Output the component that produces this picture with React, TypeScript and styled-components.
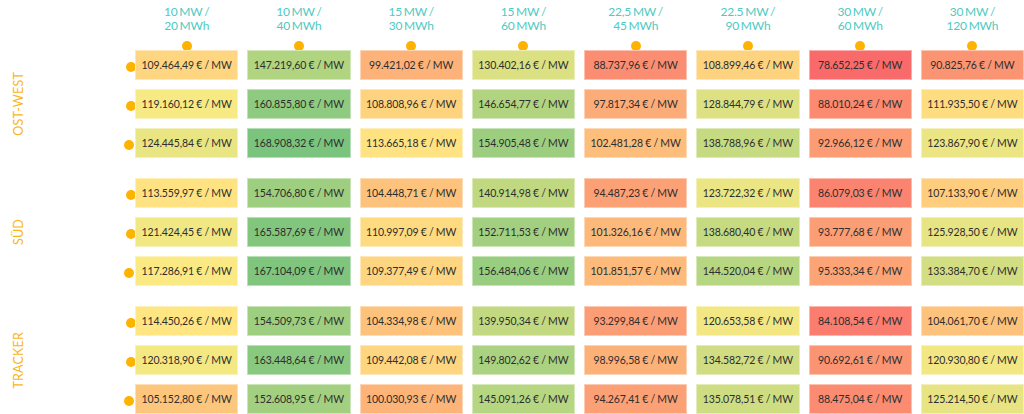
import React from "react";
import styled, { createGlobalStyle } from "styled-components";

const GlobalStyle = createGlobalStyle`
  html, body {
    margin: 0;
    padding: 0;
    background: #ffffff;
  }
  body {
    font-family: Lato, "Liberation Sans", sans-serif;
  }
`;

const columns = [
  ["10 MW /", "20 MWh"],
  ["10 MW /", "40 MWh"],
  ["15 MW /", "30 MWh"],
  ["15 MW /", "60 MWh"],
  ["22,5 MW /", "45 MWh"],
  ["22.5 MW /", "90 MWh"],
  ["30 MW /", "60 MWh"],
  ["30 MW /", "120 MWh"],
];

const groups: { label: string; rows: number[][] }[] = [
  {
    label: "OST-WEST",
    rows: [
      [109464.49, 147219.6, 99421.02, 130402.16, 88737.96, 108899.46, 78652.25, 90825.76],
      [119160.12, 160855.8, 108808.96, 146654.77, 97817.34, 128844.79, 88010.24, 111935.5],
      [124445.84, 168908.32, 113665.18, 154905.48, 102481.28, 138788.96, 92966.12, 123867.9],
    ],
  },
  {
    label: "SÜD",
    rows: [
      [113559.97, 154706.8, 104448.71, 140914.98, 94487.23, 123722.32, 86079.03, 107133.9],
      [121424.45, 165587.69, 110997.09, 152711.53, 101326.16, 138680.4, 93777.68, 125928.5],
      [117286.91, 167104.09, 109377.49, 156484.06, 101851.57, 144520.04, 95333.34, 133384.7],
    ],
  },
  {
    label: "TRACKER",
    rows: [
      [114450.26, 154509.73, 104334.98, 139950.34, 93299.84, 120653.58, 84108.54, 104061.7],
      [120318.9, 163448.64, 109442.08, 149802.62, 98996.58, 134582.72, 90692.61, 120930.8],
      [105152.8, 152608.95, 100030.93, 145091.26, 94267.41, 135078.51, 88475.04, 125214.5],
    ],
  },
];

// three colour scale: min red, median yellow, max green
const all = groups.flatMap((g) => g.rows.flat()).sort((a, b) => a - b);
const min = all[0];
const max = all[all.length - 1];
const mid = (all[all.length / 2 - 1] + all[all.length / 2]) / 2;

const RED = [249, 106, 107];
const YELLOW = [255, 235, 132];
const GREEN = [122, 196, 126];

const mix = (a: number[], b: number[], t: number) =>
  a.map((v, i) => Math.round(v + (b[i] - v) * t));

const scaleColor = (v: number) => {
  const c =
    v <= mid
      ? mix(RED, YELLOW, (v - min) / (mid - min))
      : mix(YELLOW, GREEN, (v - mid) / (max - mid));
  return `rgb(${c[0]}, ${c[1]}, ${c[2]})`;
};

const formatEuro = (v: number) => {
  const [int, dec] = v.toFixed(2).split(".");
  return `${int.replace(/\B(?=(\d{3})+(?!\d))/g, ".")},${dec} € / MW`;
};

const Page = styled.div`
  width: 1024px;
  height: 414px;
  overflow: hidden;
  display: flex;
  flex-direction: column;
  gap: 20px;
`;

const HeaderRow = styled.div`
  display: flex;
  padding-top: 5px;
  margin-bottom: -20px;
`;

const Spacer = styled.div`
  width: 135px;
  flex-shrink: 0;
`;

const CellGrid = styled.div`
  flex: 1;
  display: grid;
  grid-template-columns: repeat(8, 1fr);
  column-gap: 9px;
`;

const HeadCell = styled.div`
  display: flex;
  flex-direction: column;
  align-items: center;
  color: #4ecac1;
  font-size: 12px;
  line-height: 14px;
  text-align: center;
  letter-spacing: -0.2px;
  word-spacing: -1px;
`;

const Dot = styled.span`
  display: block;
  width: 10px;
  height: 10px;
  border-radius: 50%;
  background: #fdb300;
  flex-shrink: 0;
`;

const TopDot = styled(Dot)`
  margin-top: 8px;
  margin-bottom: -1px;
`;

const Group = styled.div`
  display: flex;
`;

const Label = styled.div`
  width: 125px;
  flex-shrink: 0;
  display: flex;
  align-items: center;
  padding-left: 13px;
  box-sizing: border-box;
`;

const LabelText = styled.span`
  writing-mode: vertical-rl;
  transform: rotate(180deg);
  color: #fbb615;
  font-size: 12.5px;
  line-height: 12px;
  letter-spacing: 0.2px;
`;

const Rows = styled.div`
  flex: 1;
  display: flex;
  flex-direction: column;
  gap: 9px;
`;

const Row = styled.div`
  display: flex;
  align-items: center;
`;

const SideDot = styled(Dot)<{ $shift: number }>`
  margin-top: 4px;
  margin-left: ${(p) => p.$shift}px;
  margin-right: ${(p) => -p.$shift}px;
`;

const Cell = styled.div<{ $bg: string }>`
  height: 30px;
  box-sizing: border-box;
  border: 1px solid rgba(255, 255, 255, 0.45);
  background: ${(p) => p.$bg};
  display: flex;
  align-items: center;
  justify-content: center;
  color: #2e2e2e;
  font-size: 10.5px;
  letter-spacing: -0.1px;
  word-spacing: -0.4px;
  white-space: nowrap;
`;

const shifts = [1, 1, -1];

export default function App() {
  return (
    <>
      <GlobalStyle />
      <Page>
        <HeaderRow>
          <Spacer />
          <CellGrid>
            {columns.map((c, i) => (
              <HeadCell key={i}>
                <span>{c[0]}</span>
                <span>{c[1]}</span>
                <TopDot />
              </HeadCell>
            ))}
          </CellGrid>
        </HeaderRow>
        {groups.map((g) => (
          <Group key={g.label}>
            <Label>
              <LabelText>{g.label}</LabelText>
            </Label>
            <Rows>
              {g.rows.map((r, ri) => (
                <Row key={ri}>
                  <SideDot $shift={shifts[ri]} />
                  <CellGrid>
                    {r.map((v, ci) => (
                      <Cell key={ci} $bg={scaleColor(v)}>
                        {formatEuro(v)}
                      </Cell>
                    ))}
                  </CellGrid>
                </Row>
              ))}
            </Rows>
          </Group>
        ))}
      </Page>
    </>
  );
}
